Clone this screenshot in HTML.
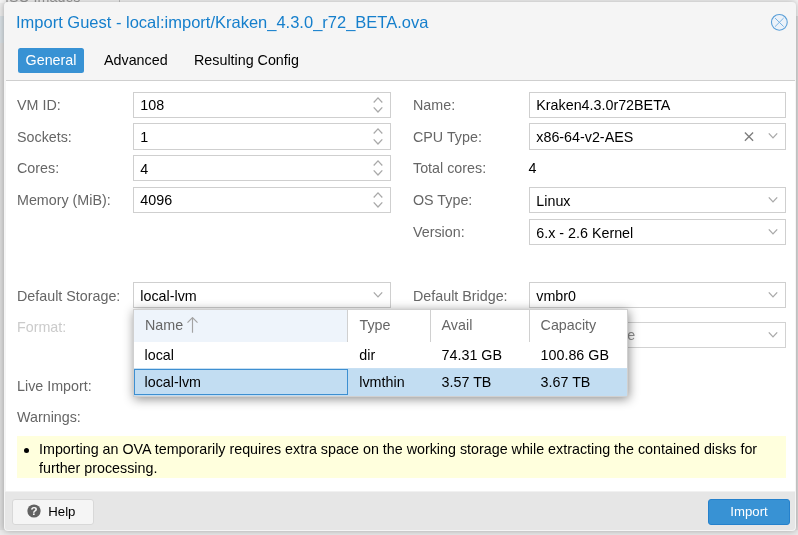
<!DOCTYPE html>
<html><head><meta charset="utf-8">
<style>
*{box-sizing:border-box;margin:0;padding:0}
html,body{width:798px;height:535px;overflow:hidden}
body{font-family:"Liberation Sans",sans-serif;font-size:14.3px;color:#000;background:#dedede;position:relative}
.bgtop{position:absolute;left:0;top:0;width:798px;height:16px;background:#f5f5f5}
.bgrest{position:absolute;left:0;top:16px;width:300px;height:27px;background:#d9e0e5}
.bgtxt{position:absolute;left:5px;top:-11px;font-size:14.3px;color:#9c9c9c;white-space:nowrap;will-change:transform}
.win{position:absolute;left:4px;top:2px;width:792px;height:529px;background:#f5f5f5;border-radius:4px;box-shadow:0 0 7px rgba(0,0,0,.3)}
.page{position:absolute;left:0;top:0;width:798px;height:535px;will-change:transform}
.title{position:absolute;left:16px;top:12px;font-size:16.5px;color:#157fcc;white-space:nowrap;line-height:20px}
.close{position:absolute;left:769px;top:12px;width:20px;height:20px}
.tab{position:absolute;top:48px;height:25px;line-height:25px;white-space:nowrap}
.tab.act{background:#3892d4;color:#fff;border-radius:2.5px;text-align:center}
.body{position:absolute;left:6px;top:80px;width:789px;height:412px;background:#fff;border-top:1px solid #cfcfcf}
.lbl{position:absolute;color:#666;white-space:nowrap;line-height:24px;height:24px}
.lbl.dis{color:#cbcbcb}
.fld{position:absolute;border:1px solid #cfcfcf;background:#fff}
.fld.dis{border-color:#d2d2d2}
.txt{position:absolute;line-height:24px;height:24px;white-space:nowrap}
.txt.dis{color:#8f8f8f}
.ic{position:absolute}
.warn{position:absolute;left:17px;top:436px;width:769px;height:42px;background:#ffffdd}
.warn .t{position:absolute;left:22px;top:4px;line-height:19px;width:745px}
.warn .b{position:absolute;left:6.9px;top:11.7px;width:5px;height:5px;border-radius:50%;background:#000}
.foot{position:absolute;left:5px;top:492px;width:790px;height:38px;background:#e6e6e6;border-radius:0 0 3px 3px}
.btn{position:absolute;top:499px;height:26px;line-height:24px;border-radius:3px;white-space:nowrap;font-size:13.2px}
.btn.help{left:12px;width:82px;background:#f5f5f5;border:1px solid #d8d8d8;color:#000}
.btn.imp{left:708px;width:82px;background:#3892d4;border:1px solid #2581cc;color:#fff;text-align:center}
.dd{position:absolute;left:133px;top:309px;width:495px;height:88px;background:#fff;box-shadow:1px 2px 10px rgba(0,0,0,.45);border:1px solid #d0d0d0}
.dd .hd{position:absolute;top:0;height:32px;line-height:30.4px;color:#666;background:#fff;border-right:1px solid #d0d0d0;padding-left:10.6px}
.dd .c{position:absolute;height:27px;line-height:27px;padding-left:10.6px;white-space:nowrap}
</style></head><body>
<div class="bgtop"></div><div style="position:absolute;left:0;top:530px;width:798px;height:5px;background:#ebebeb"></div><div style="position:absolute;left:0;top:3px;width:5px;height:13px;background:#ececec"></div><div class="bgrest"></div>
<div class="bgtxt">ISO Images</div><div style="position:absolute;left:119px;top:0;width:1px;height:3px;background:#c4c4c4"></div>
<div class="win"></div>
<div class="page">
<div class="title">Import Guest - local:import/Kraken_4.3.0_r72_BETA.ova</div>
<svg class="close" viewBox="0 0 20 20"><g transform="translate(10.35,10.33)"><circle cx="0" cy="0" r="7.9" fill="#ecf2f9" stroke="#5a9fd8" stroke-width="1.1"/><path d="M-4 -4L4 4M4 -4L-4 4" stroke="#78b2e2" stroke-width="1" stroke-linecap="round"/></g></svg>
<div class="tab act" style="left:18px;width:66px">General</div>
<div class="tab" style="left:104px">Advanced</div>
<div class="tab" style="left:194px">Resulting Config</div>
<div class="body"></div>
<div class="lbl " style="left:17px;top:93px">VM ID:</div>
<div class="fld " style="left:133px;top:92px;width:258px;height:26px"></div>
<div class="txt " style="left:140.3px;top:93px">108</div>
<svg class="ic" style="left:372px;top:92px" width="12" height="26" viewBox="0 0 12 26"><path d="M1.7 10.5L6 5.9L10.3 10.5M1.7 15.399999999999999L6 20L10.3 15.399999999999999" fill="none" stroke="#a9a9a9" stroke-width="1.3"/></svg>
<div class="lbl " style="left:17px;top:125px">Sockets:</div>
<div class="fld " style="left:133px;top:123px;width:258px;height:27px"></div>
<div class="txt " style="left:140.3px;top:125px">1</div>
<svg class="ic" style="left:372px;top:123px" width="12" height="27" viewBox="0 0 12 27"><path d="M1.7 10.5L6 5.9L10.3 10.5M1.7 16.4L6 21L10.3 16.4" fill="none" stroke="#a9a9a9" stroke-width="1.3"/></svg>
<div class="lbl " style="left:17px;top:156px">Cores:</div>
<div class="fld " style="left:133px;top:155px;width:258px;height:26px"></div>
<div class="txt " style="left:140.3px;top:157px">4</div>
<svg class="ic" style="left:372px;top:155px" width="12" height="26" viewBox="0 0 12 26"><path d="M1.7 10.5L6 5.9L10.3 10.5M1.7 15.399999999999999L6 20L10.3 15.399999999999999" fill="none" stroke="#a9a9a9" stroke-width="1.3"/></svg>
<div class="lbl " style="left:17px;top:188px">Memory (MiB):</div>
<div class="fld " style="left:133px;top:187px;width:258px;height:26px"></div>
<div class="txt " style="left:140.3px;top:188px">4096</div>
<svg class="ic" style="left:372px;top:187px" width="12" height="26" viewBox="0 0 12 26"><path d="M1.7 10.5L6 5.9L10.3 10.5M1.7 15.399999999999999L6 20L10.3 15.399999999999999" fill="none" stroke="#a9a9a9" stroke-width="1.3"/></svg>
<div class="lbl " style="left:413px;top:93px">Name:</div>
<div class="fld " style="left:529px;top:92px;width:257px;height:26px"></div>
<div class="txt " style="left:536.3px;top:93px">Kraken4.3.0r72BETA</div>
<div class="lbl " style="left:413px;top:125px">CPU Type:</div>
<div class="fld " style="left:529px;top:123px;width:257px;height:27px"></div>
<div class="txt " style="left:536.3px;top:125px">x86-64-v2-AES</div>
<svg class="ic" style="left:767px;top:123px" width="12" height="27" viewBox="0 0 12 27"><path d="M1.8 10.4L6 14.9L10.2 10.4" fill="none" stroke="#a9a9a9" stroke-width="1.3"/></svg>
<svg class="ic" style="left:742.6px;top:123px" width="12" height="27" viewBox="0 0 12 27"><path d="M1.9 9.5L10.1 17.7M10.1 9.5L1.9 17.7" fill="none" stroke="#7d7d7d" stroke-width="1.35"/></svg>
<div class="lbl " style="left:413px;top:156px">Total cores:</div>
<div class="txt" style="left:528.5px;top:156px">4</div>
<div class="lbl " style="left:413px;top:188px">OS Type:</div>
<div class="fld " style="left:529px;top:187px;width:257px;height:26px"></div>
<div class="txt " style="left:536.3px;top:189px">Linux</div>
<svg class="ic" style="left:767px;top:187px" width="12" height="26" viewBox="0 0 12 26"><path d="M1.8 10.4L6 14.9L10.2 10.4" fill="none" stroke="#a9a9a9" stroke-width="1.3"/></svg>
<div class="lbl " style="left:413px;top:220px">Version:</div>
<div class="fld " style="left:529px;top:219px;width:257px;height:26px"></div>
<div class="txt " style="left:536.3px;top:221px">6.x - 2.6 Kernel</div>
<svg class="ic" style="left:767px;top:219px" width="12" height="26" viewBox="0 0 12 26"><path d="M1.8 10.4L6 14.9L10.2 10.4" fill="none" stroke="#a9a9a9" stroke-width="1.3"/></svg>
<div class="lbl " style="left:17px;top:284px">Default Storage:</div>
<div class="fld " style="left:133px;top:282px;width:258px;height:26px"></div>
<div class="txt " style="left:140.3px;top:284px">local-lvm</div>
<svg class="ic" style="left:372px;top:282px" width="12" height="26" viewBox="0 0 12 26"><path d="M1.8 10.4L6 14.9L10.2 10.4" fill="none" stroke="#a9a9a9" stroke-width="1.3"/></svg>
<div class="lbl " style="left:413px;top:284px">Default Bridge:</div>
<div class="fld " style="left:529px;top:282px;width:257px;height:26px"></div>
<div class="txt " style="left:536.3px;top:284px">vmbr0</div>
<svg class="ic" style="left:767px;top:282px" width="12" height="26" viewBox="0 0 12 26"><path d="M1.8 10.4L6 14.9L10.2 10.4" fill="none" stroke="#a9a9a9" stroke-width="1.3"/></svg>
<div class="lbl dis" style="left:17px;top:315px">Format:</div>
<div class="fld dis" style="left:529px;top:322px;width:257px;height:26px"></div>
<div class="txt dis" style="left:627.3px;top:323px">e</div>
<svg class="ic" style="left:767px;top:322px" width="12" height="26" viewBox="0 0 12 26"><path d="M1.8 10.4L6 14.9L10.2 10.4" fill="none" stroke="#a9a9a9" stroke-width="1.3"/></svg>
<div class="lbl " style="left:17px;top:374px">Live Import:</div>
<div class="lbl " style="left:17px;top:405px">Warnings:</div>
<div class="warn"><div class="b"></div><div class="t">Importing an OVA temporarily requires extra space on the working storage while extracting the contained disks for further processing.</div></div>
<div style="position:absolute;left:5px;top:491px;width:790px;height:1px;background:#f1f1f1"></div><div class="foot"></div>
<div class="btn help"><svg style="position:absolute;left:13.8px;top:4.4px" width="14" height="14" viewBox="0 0 14 14"><circle cx="7" cy="7" r="6.6" fill="#626262"/><text x="7" y="11.2" font-size="11.6" font-weight="bold" text-anchor="middle" fill="#fafafa" font-family="Liberation Sans, sans-serif">?</text></svg><span style="position:absolute;left:35.3px">Help</span></div>
<div class="btn imp">Import</div>
<div class="dd">
  <div class="hd" style="left:0;width:214px;background:#eef4fb;padding-left:11px">Name<svg style="position:absolute;left:52px;top:7px" width="13" height="17" viewBox="0 0 13 17"><path d="M6.5 0.9V15.7M1.5 5.6L6.5 0.6L11.5 5.6" fill="none" stroke="#a3a3a3" stroke-width="1.15"/></svg></div>
  <div class="hd" style="left:214px;width:83px;padding-left:11.5px">Type</div>
  <div class="hd" style="left:297px;width:99px">Avail</div>
  <div class="hd" style="left:396px;width:97px;border-right:0">Capacity</div>
  <div class="c" style="left:0;top:32px">local</div>
  <div class="c" style="left:214px;top:32px;padding-left:11.3px">dir</div>
  <div class="c" style="left:297px;top:32px">74.31 GB</div>
  <div class="c" style="left:396px;top:32px">100.86 GB</div>
  <div style="position:absolute;left:0;top:58px;width:493px;height:1px;background:#c8e0f3"></div><div style="position:absolute;left:0;top:59px;width:493px;height:27px;background:#c2ddf2"></div>
  <div style="position:absolute;left:0;top:59px;width:214px;height:26px;border:1px solid #3d8fd1"></div>
  <div class="c" style="left:0;top:59px">local-lvm</div>
  <div class="c" style="left:214px;top:59px;padding-left:11.3px">lvmthin</div>
  <div class="c" style="left:297px;top:59px">3.57 TB</div>
  <div class="c" style="left:396px;top:59px">3.67 TB</div>
</div>
</div>
</body></html>
